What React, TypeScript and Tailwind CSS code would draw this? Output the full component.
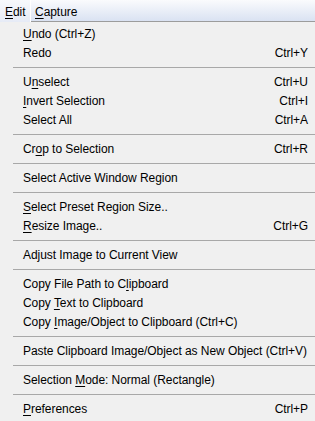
import React from "react";

type Row =
  | { sep: true }
  | { label: React.ReactNode; key?: string; sep?: false };

// underline the mnemonic letter at index i
function m(text: string, i: number) {
  return (
    <>
      {text.slice(0, i)}
      <span className="underline underline-offset-[2px] decoration-1">{text[i]}</span>
      {text.slice(i + 1)}
    </>
  );
}

const rows: Row[] = [
  { label: m("Undo (Ctrl+Z)", 0) },
  { label: "Redo", key: "Ctrl+Y" },
  { sep: true },
  { label: m("Unselect", 1), key: "Ctrl+U" },
  { label: m("Invert Selection", 0), key: "Ctrl+I" },
  { label: "Select All", key: "Ctrl+A" },
  { sep: true },
  { label: m("Crop to Selection", 2), key: "Ctrl+R" },
  { sep: true },
  { label: "Select Active Window Region" },
  { sep: true },
  { label: m("Select Preset Region Size..", 0) },
  { label: m("Resize Image..", 0), key: "Ctrl+G" },
  { sep: true },
  { label: "Adjust Image to Current View" },
  { sep: true },
  { label: m("Copy File Path to Clipboard", 19) },
  { label: m("Copy Text to Clipboard", 5) },
  { label: m("Copy Image/Object to Clipboard (Ctrl+C)", 5) },
  { sep: true },
  { label: "Paste Clipboard Image/Object as New Object (Ctrl+V)" },
  { sep: true },
  { label: m("Selection Mode: Normal (Rectangle)", 10) },
  { sep: true },
  { label: m("Preferences", 0), key: "Ctrl+P" },
];

export default function App() {
  return (
    <div
      className="w-[315px] h-[421px] overflow-hidden bg-[#f0f0f0] text-[12px] tracking-[-0.05px] text-black"
      style={{ fontFamily: '"Liberation Sans", Arial, sans-serif' }}
    >
      {/* menu bar */}
      <div className="flex h-[22px]">
        <div className="w-[31px] h-[22px] border-r border-white bg-gradient-to-b from-[#f7f9fc] to-[#e6ebf6] pl-[5px] pt-[3px]">
          {m("Edit", 0)}
        </div>
        <div className="flex-1 h-[22px] border-b border-[#9c9c9c] bg-gradient-to-b from-[#fafbfd] to-[#dae2f2] pl-[4px] pt-[3px]">
          {m("Capture", 0)}
        </div>
      </div>

      {/* dropdown */}
      <div className="pt-[2px]">
        {rows.map((r, i) =>
          r.sep ? (
            <div key={i} className="h-[10px] flex items-center pl-[13px]">
              <div className="w-full border-t border-[#a8a8a8]" />
            </div>
          ) : (
            <div key={i} className="h-[19px] flex items-center justify-between pl-[23px] pr-[7px] whitespace-nowrap">
              <span>{r.label}</span>
              {r.key && <span>{r.key}</span>}
            </div>
          )
        )}
      </div>
    </div>
  );
}
